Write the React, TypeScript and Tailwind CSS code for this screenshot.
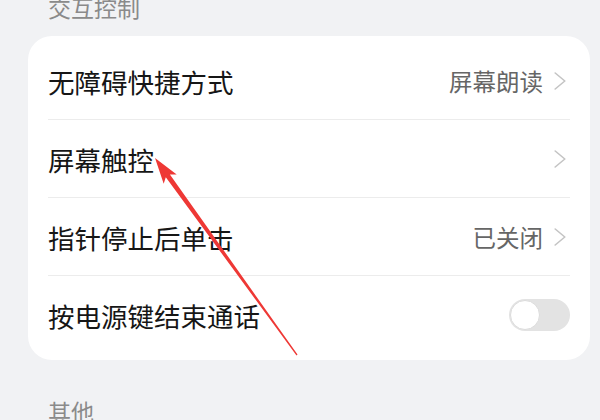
import React from 'react';

interface Row {
  label: string;
  value?: string;
  chevron?: boolean;
  toggle?: boolean;
}

const rows: Row[] = [
  { label: '无障碍快捷方式', value: '屏幕朗读', chevron: true },
  { label: '屏幕触控', chevron: true },
  { label: '指针停止后单击', value: '已关闭', chevron: true },
  { label: '按电源键结束通话', toggle: true },
];

function Chevron() {
  return (
    <svg width="12" height="18" viewBox="0 0 12 18" className="shrink-0 mr-[4px]">
      <path d="M1.2 1 L10.8 9 L1.2 17" fill="none" stroke="#c4c4c4" strokeWidth="1.6" strokeLinecap="round" strokeLinejoin="round" />
    </svg>
  );
}

function Toggle() {
  return (
    <div className="w-[61px] h-[32px] rounded-full bg-[#e3e3e3] p-[1px] flex items-center">
      <div className="w-[30px] h-[30px] rounded-full bg-white border border-[#dcdcdc]" />
    </div>
  );
}

export default function App() {
  return (
    <div
      className="relative w-[600px] h-[420px] overflow-hidden bg-[#f1f2f4]"
      style={{ fontFamily: '"Noto Sans CJK SC", "Noto Sans", sans-serif' }}
    >
      {/* Section header */}
      <div className="-mt-[7px] mb-[15px] h-[28px] leading-[28px] pl-[48px] text-[23px] text-[#8a8a8a]">
        交互控制
      </div>

      {/* Card */}
      <div className="mx-[28px] w-[562px] h-[324px] rounded-[24px] bg-white px-[20px] py-[6px]">
        {rows.map((row, i) => (
          <div
            key={i}
            className={`h-[78px] flex items-center justify-between ${i < rows.length - 1 ? 'border-b border-[#ececec]' : ''}`}
          >
            <span className="text-[26.5px] text-[#161616] leading-none pt-[3px]">{row.label}</span>
            <div className="flex items-center gap-[11px]">
              {row.value && (
                <span className="text-[23.5px] text-[#666666] leading-none pt-[3px]">{row.value}</span>
              )}
              {row.chevron && <Chevron />}
              {row.toggle && <Toggle />}
            </div>
          </div>
        ))}
      </div>

      {/* Next section header */}
      <div className="mt-[37px] h-[28px] leading-[28px] pl-[48px] text-[23px] text-[#8a8a8a]">
        其他
      </div>

      {/* Red annotation arrow */}
      <svg className="absolute left-0 top-0 pointer-events-none" width="600" height="420" viewBox="0 0 600 420">
        <polygon
          points="155,158 176.7,174.4 169.9,174.4 297.5,354.6 296.5,355.4 165.8,177.3 163.7,183.8"
          fill="#ee3835"
        />
      </svg>
    </div>
  );
}
